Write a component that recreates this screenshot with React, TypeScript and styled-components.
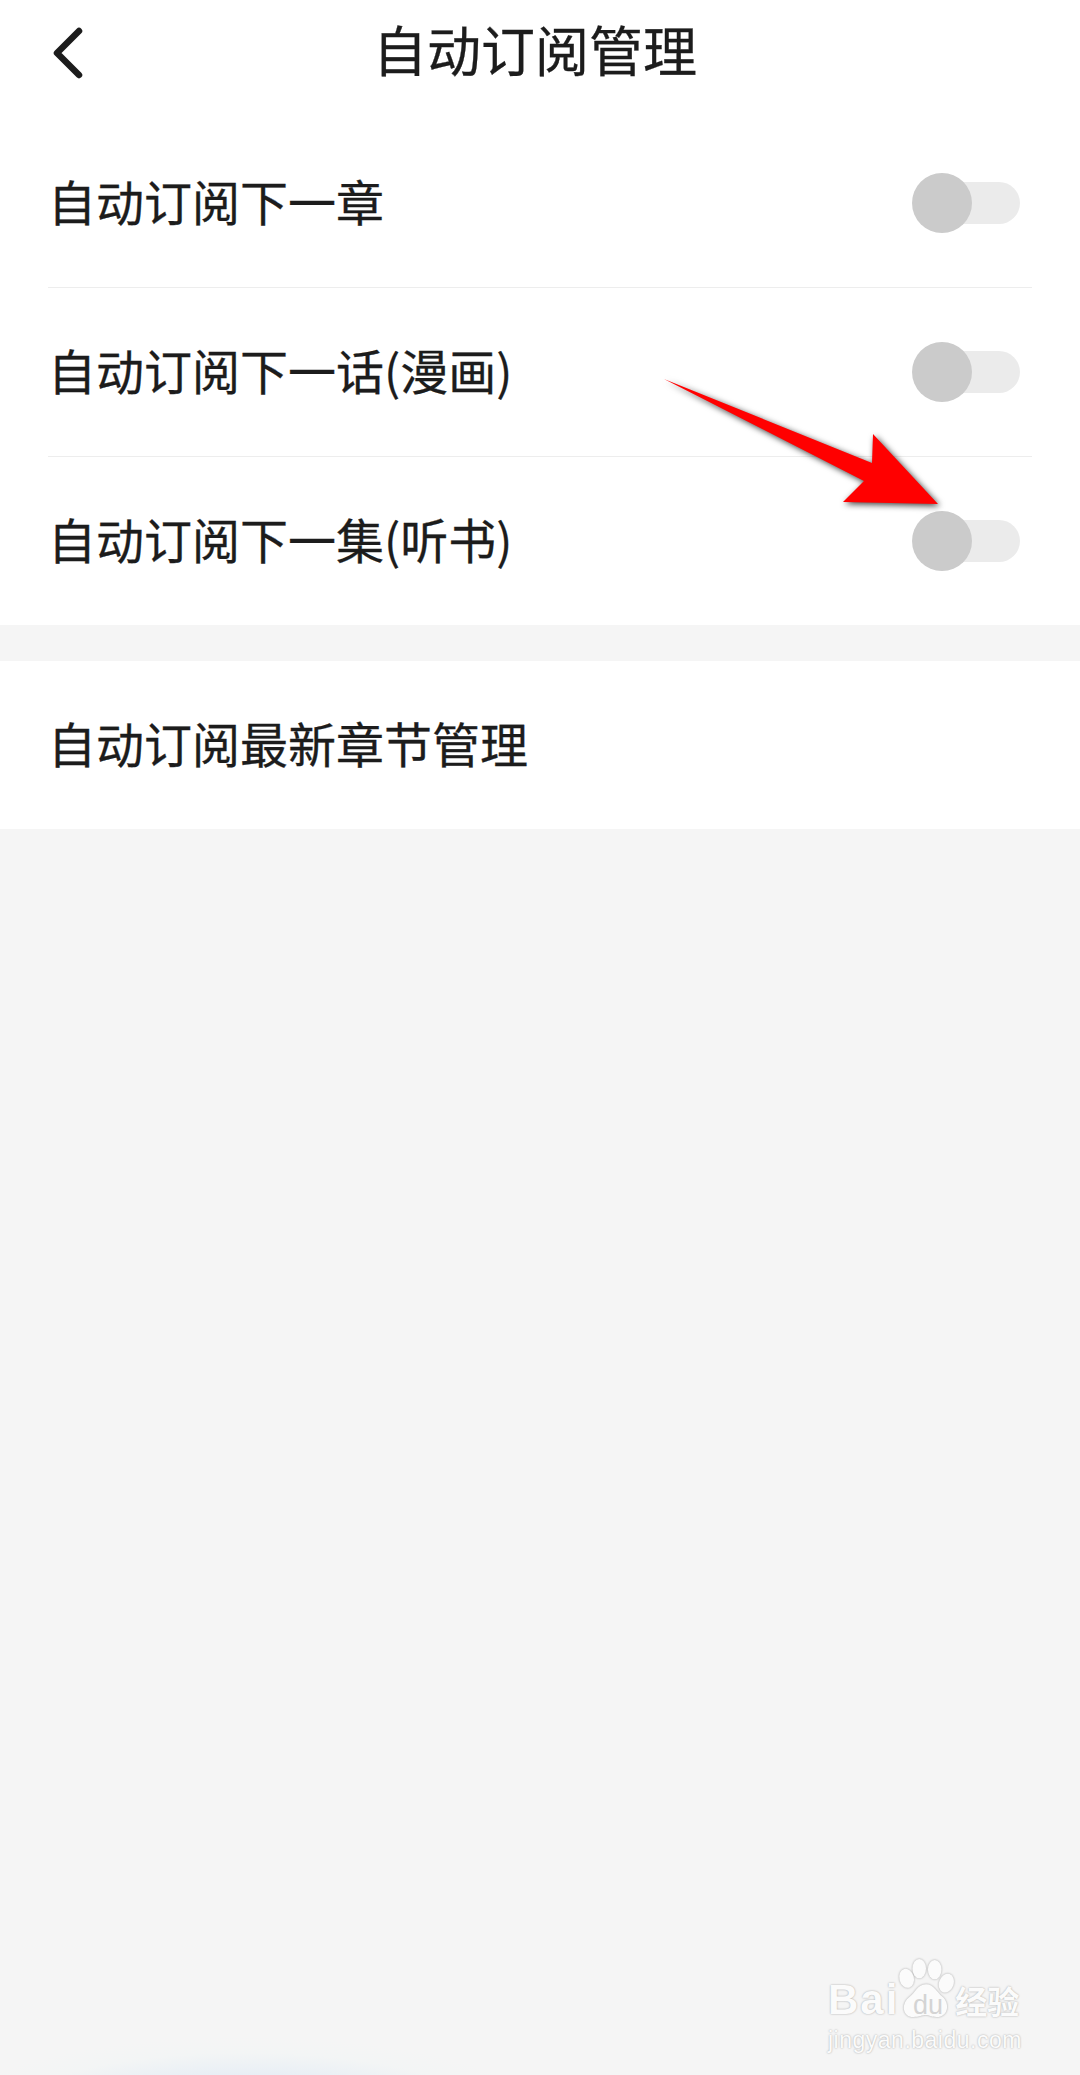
import React from "react";
import styled, { createGlobalStyle } from "styled-components";

const GlobalStyle = createGlobalStyle`
  html, body {
    margin: 0;
    padding: 0;
    background: #f5f5f5;
  }
  body {
    font-family: "Noto Sans CJK SC", "Noto Sans", sans-serif;
    color: #1c1c1c;
  }
`;

const Page = styled.div`
  position: relative;
  width: 1080px;
  height: 2075px;
  overflow: hidden;
  background: #f5f5f5;
`;

const Header = styled.header`
  display: flex;
  justify-content: center;
  height: 118px;
  padding: 13px 10px 0 0;
  box-sizing: border-box;
  background: #fff;
  position: relative;
`;

const BackButton = styled.svg`
  position: absolute;
  left: 50px;
  top: 26px;
  width: 36px;
  height: 54px;
`;

const Title = styled.h1`
  margin: 0;
  font-size: 54px;
  font-weight: 400;
  line-height: 72px;
  -webkit-text-stroke: 0.3px #1c1c1c;
`;

const Section = styled.section<{ $gap?: number }>`
  background: #fff;
  margin-top: ${(p) => p.$gap || 0}px;
`;

const Row = styled.div<{ $line?: boolean; $height?: number }>`
  display: flex;
  align-items: center;
  justify-content: space-between;
  height: ${(p) => p.$height || 169}px;
  margin: 0 48px;
  padding: 0 12px 0 0;
  box-sizing: border-box;
  box-shadow: ${(p) => (p.$line ? "0 1px 0 #ededed" : "none")};
`;

const Label = styled.span`
  font-size: 48px;
  line-height: 72px;
  position: relative;
  top: -3px;
  -webkit-text-stroke: 0.3px #1c1c1c;
`;

const Toggle = styled.div`
  position: relative;
  width: 108px;
  height: 60px;
  display: flex;
  align-items: center;
  justify-content: flex-end;
`;

const Track = styled.div`
  width: 90px;
  height: 42px;
  border-radius: 21px;
  background: #ebebeb;
`;

const Knob = styled.div`
  position: absolute;
  left: 0;
  top: 0;
  width: 60px;
  height: 60px;
  border-radius: 50%;
  background: #cbcbcb;
`;

const Arrow = styled.svg`
  position: absolute;
  left: 650px;
  top: 365px;
  width: 310px;
  height: 160px;
  filter: drop-shadow(2px 2px 3px rgba(0, 0, 0, 0.75));
`;

const BottomGlow = styled.div`
  position: absolute;
  left: 0;
  bottom: 0;
  width: 600px;
  height: 40px;
  background: radial-gradient(
    ellipse 310px 88px at 245px 90px,
    #dfeaf5 0%,
    #e5edf5 50%,
    #f3f5f5 82%,
    #f5f5f5 100%
  );
`;

const Watermark = styled.div`
  position: absolute;
  left: 828px;
  top: 1958px;
  width: 200px;
  height: 96px;
  color: #fbfbfb;
  font-family: "Liberation Sans", Arial, sans-serif;
`;

const BrandLine = styled.div`
  display: flex;
  align-items: flex-end;
  height: 64px;
`;

const BrandBai = styled.span`
  font-size: 42px;
  font-weight: 700;
  line-height: 44px;
  letter-spacing: 2px;
  text-shadow: 0 0 2px rgba(0, 0, 0, 0.35);
`;

const Paw = styled.svg`
  width: 58px;
  height: 60px;
  margin: 0 0 4px -2px;
  flex-shrink: 0;
  filter: drop-shadow(0 0 1px rgba(0, 0, 0, 0.32));
`;

const PawText = styled.span`
  position: absolute;
  left: 78px;
  top: 33px;
  width: 44px;
  text-align: center;
  font-size: 27px;
  font-weight: 400;
  line-height: 28px;
  color: #d4d4d4;
`;

const BrandCn = styled.span`
  font-family: "Noto Sans CJK SC", sans-serif;
  font-size: 32px;
  font-weight: 700;
  line-height: 44px;
  white-space: nowrap;
  text-shadow: 0 0 2px rgba(0, 0, 0, 0.35);
`;

const Domain = styled.div`
  margin-top: 4px;
  font-size: 23px;
  line-height: 28px;
  letter-spacing: 0.5px;
  white-space: nowrap;
  text-shadow: 0 0 2px rgba(0, 0, 0, 0.35);
`;

const rows = ["自动订阅下一章", "自动订阅下一话(漫画)", "自动订阅下一集(听书)"];

function Switch() {
  return (
    <Toggle>
      <Track />
      <Knob />
    </Toggle>
  );
}

export default function App() {
  return (
    <Page>
      <GlobalStyle />
      <Header>
        <BackButton viewBox="0 0 36 54" fill="none">
          <path
            d="M29 5 L7 27 L29 49"
            stroke="#1c1c1c"
            strokeWidth="6.5"
            strokeLinecap="round"
            strokeLinejoin="round"
          />
        </BackButton>
        <Title>自动订阅管理</Title>
      </Header>
      <Section>
        {rows.map((text, i) => (
          <Row key={text} $line={i < rows.length - 1}>
            <Label>{text}</Label>
            <Switch />
          </Row>
        ))}
      </Section>
      <Section $gap={36}>
        <Row $height={168}>
          <Label>自动订阅最新章节管理</Label>
        </Row>
      </Section>
      <Arrow viewBox="650 365 310 160">
        <path d="M664 379 L872 463 L873 434 L938 504 L843 502 L864 481 Z" fill="#ff0000" />
      </Arrow>
      <BottomGlow />
      <Watermark>
        <BrandLine>
          <BrandBai>Bai</BrandBai>
          <Paw viewBox="0 0 58 62" fill="#fbfbfb">
            <ellipse cx="9" cy="21" rx="7.5" ry="10" transform="rotate(-15 9 21)" />
            <ellipse cx="22" cy="11" rx="7" ry="10" />
            <ellipse cx="38" cy="12" rx="7" ry="10" />
            <ellipse cx="50" cy="26" rx="7.5" ry="10" transform="rotate(20 50 26)" />
            <path d="M29 27 C37 27 40 35 46 40 C54 47 52 61 40 61 C34 61 32 59 29 59 C25 59 22 61 16 61 C5 61 3 48 11 41 C18 36 20 27 29 27 Z" />
          </Paw>
          <PawText>du</PawText>
          <BrandCn>经验</BrandCn>
        </BrandLine>
        <Domain>jingyan.baidu.com</Domain>
      </Watermark>
    </Page>
  );
}
